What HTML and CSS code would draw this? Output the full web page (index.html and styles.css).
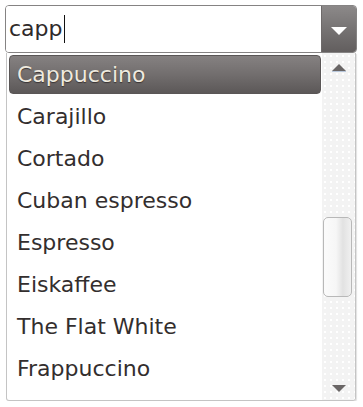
FILE: index.html
```html
<!DOCTYPE html>
<html>
<head>
<meta charset="utf-8">
<link rel="stylesheet" href="styles.css">
</head>
<body>
<div class="combo">
  <div class="field"><span class="value">capp</span><span class="caret"></span></div>
  <div class="btn"><span class="tri-down"></span></div>
</div>
<div class="list">
  <div class="items">
    <div class="item selected">Cappuccino</div>
    <div class="item">Carajillo</div>
    <div class="item">Cortado</div>
    <div class="item">Cuban espresso</div>
    <div class="item">Espresso</div>
    <div class="item">Eiskaffee</div>
    <div class="item">The Flat White</div>
    <div class="item">Frappuccino</div>
  </div>
  <div class="scrollbar">
    <div class="arrow up"></div>
    <div class="track"><div class="thumb"></div></div>
    <div class="arrow down"></div>
  </div>
</div>
</body>
</html>
```
FILE: styles.css
```css
html, body {
  margin: 0;
  padding: 0;
  background: #fff;
  font-family: "DejaVu Sans", Verdana, sans-serif;
}
.combo {
  margin: 5px 0 0 5px;
  width: 352px;
  height: 48px;
  box-sizing: border-box;
  border: 1px solid #858383;
  border-radius: 4px;
  display: flex;
  overflow: hidden;
}
.field {
  flex: 1;
  display: flex;
  align-items: center;
  padding-left: 3px;
  font-size: 22px;
  color: #2f2a2a;
  background: #fff;
}
.value {
  line-height: 26px;
}
.caret {
  display: inline-block;
  width: 1px;
  height: 28px;
  background: #111;
  margin-left: 1px;
}
.btn {
  width: 34px;
  border-left: 1px solid #6e6a6a;
  background: linear-gradient(#8c8989, #787575 45%, #625e5e);
  display: flex;
  align-items: center;
  justify-content: center;
}
.tri-down {
  width: 0;
  height: 0;
  border-left: 8px solid transparent;
  border-right: 8px solid transparent;
  border-top: 8px solid #fff;
  margin-top: 3px;
}
.list {
  margin-left: 6px;
  width: 350px;
  height: 348px;
  box-sizing: border-box;
  border: 1px solid #c4c4c4;
  border-top: none;
  border-radius: 0 0 3px 3px;
  box-shadow: 1px 1px 1px rgba(0,0,0,0.12);
  display: flex;
  overflow: hidden;
}
.items {
  flex: 1;
  padding: 2px 1px 0 2px;
  overflow: hidden;
}
.item {
  height: 39px;
  line-height: 39px;
  margin-bottom: 3px;
  padding-left: 8px;
  font-size: 22px;
  color: #332e2e;
  box-sizing: border-box;
  white-space: nowrap;
}
.item.selected {
  background: linear-gradient(#858181, #726e6e 50%, #5c5858);
  border: 1px solid #5a5656;
  border-radius: 4px;
  line-height: 37px;
  padding-left: 7px;
  color: #efeadf;
  text-shadow: 0 1px 1px #3a3434;
}
.scrollbar {
  width: 33px;
  background-color: #f3f3f3;
  background-image: radial-gradient(circle, #ffffff 0.8px, transparent 1px);
  background-size: 6px 6px;
  display: flex;
  flex-direction: column;
  align-items: center;
}
.arrow {
  height: 28px;
  width: 100%;
  display: flex;
  justify-content: center;
  align-items: center;
}
.arrow.up::before {
  content: "";
  border-left: 7px solid transparent;
  border-right: 7px solid transparent;
  border-bottom: 7px solid #6a6666;
  box-shadow: 0 1px 0 #b9c8dc;
  margin-top: 0px;
}
.arrow.down::before {
  content: "";
  border-left: 7px solid transparent;
  border-right: 7px solid transparent;
  border-top: 7px solid #6a6666;
  margin-top: 4px;
}
.track {
  flex: 1;
  width: 100%;
  box-sizing: border-box;
  padding-top: 136px;
  display: flex;
  justify-content: center;
}
.thumb {
  width: 29px;
  height: 80px;
  box-sizing: border-box;
  border: 1px solid #b8b8b8;
  border-radius: 5px;
  background: linear-gradient(90deg, #fbfbfb, #f6f6f6 45%, #e2e2e2 70%, #f0f0f0);
  margin-left: -2px;
}
```
